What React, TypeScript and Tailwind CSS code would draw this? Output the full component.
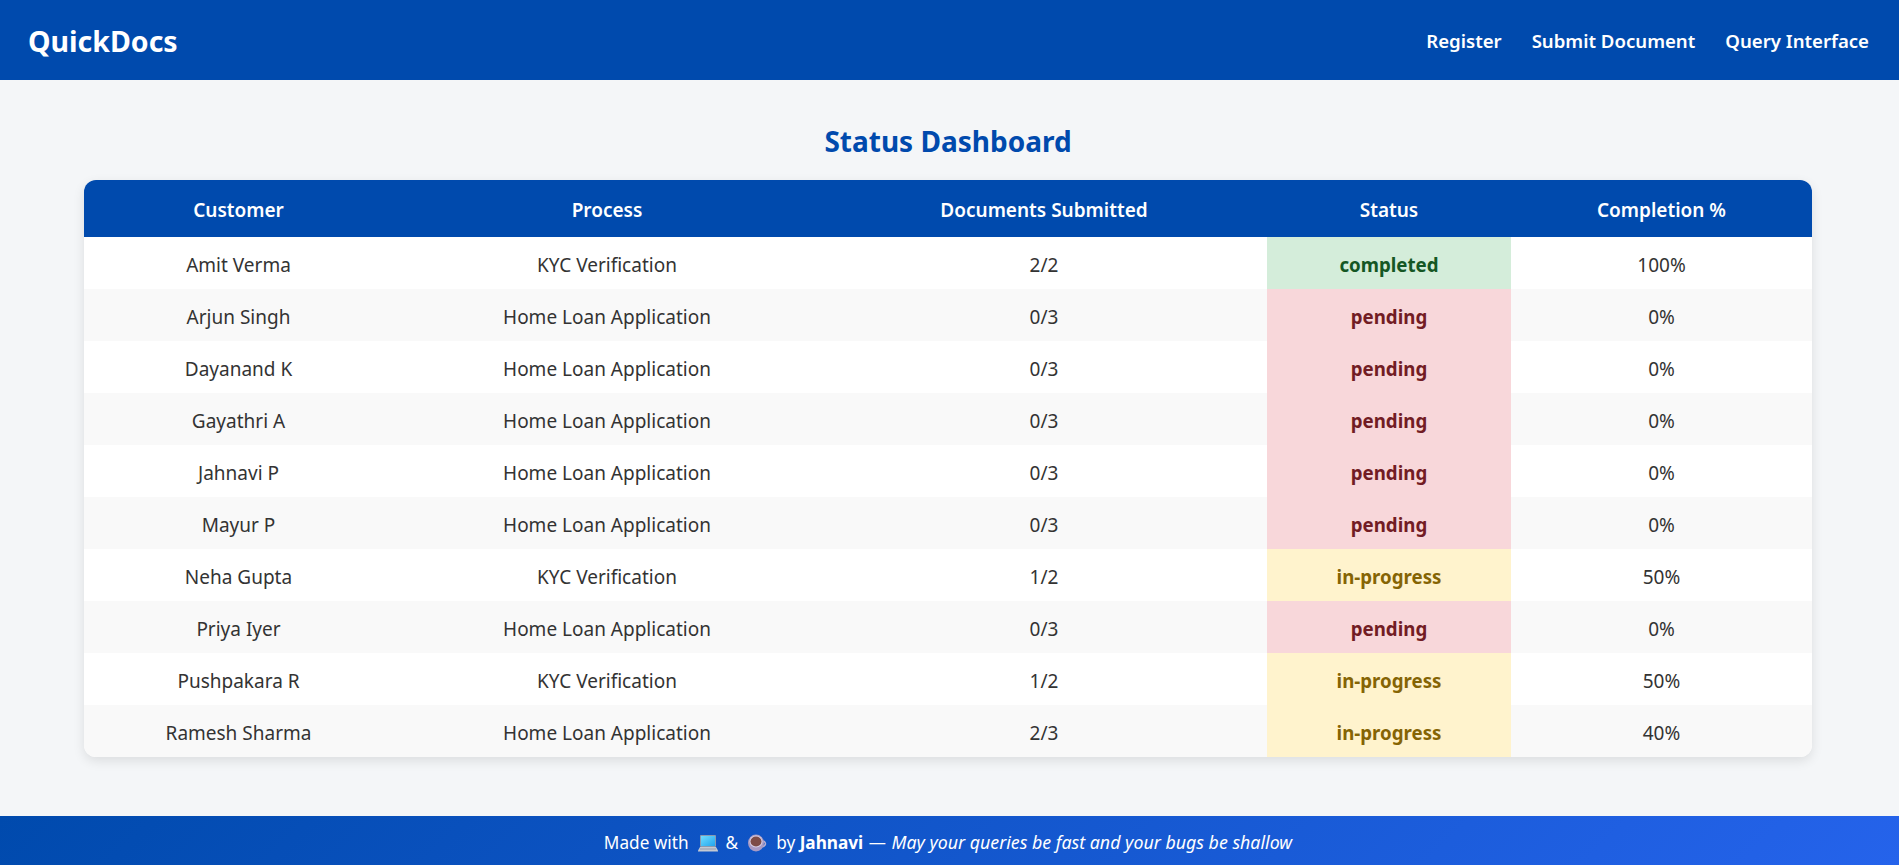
const ROWS = [
  { customer: "Amit Verma", process: "KYC Verification", docs: "2/2", status: "completed", pct: "100%" },
  { customer: "Arjun Singh", process: "Home Loan Application", docs: "0/3", status: "pending", pct: "0%" },
  { customer: "Dayanand K", process: "Home Loan Application", docs: "0/3", status: "pending", pct: "0%" },
  { customer: "Gayathri A", process: "Home Loan Application", docs: "0/3", status: "pending", pct: "0%" },
  { customer: "Jahnavi P", process: "Home Loan Application", docs: "0/3", status: "pending", pct: "0%" },
  { customer: "Mayur P", process: "Home Loan Application", docs: "0/3", status: "pending", pct: "0%" },
  { customer: "Neha Gupta", process: "KYC Verification", docs: "1/2", status: "in-progress", pct: "50%" },
  { customer: "Priya Iyer", process: "Home Loan Application", docs: "0/3", status: "pending", pct: "0%" },
  { customer: "Pushpakara R", process: "KYC Verification", docs: "1/2", status: "in-progress", pct: "50%" },
  { customer: "Ramesh Sharma", process: "Home Loan Application", docs: "2/3", status: "in-progress", pct: "40%" },
];

const STATUS_STYLES: Record<string, string> = {
  completed: "bg-[#d4edda] text-[#155724]",
  pending: "bg-[#f8d7da] text-[#721c24]",
  "in-progress": "bg-[#fff3cd] text-[#856404]",
};

function LaptopIcon() {
  return (
    <svg width="20" height="20" viewBox="0 0 20 20" className="inline-block align-[-4px] ml-[9px] mr-[8px]">
      <defs>
        <linearGradient id="screen" x1="0" y1="0" x2="1" y2="1">
          <stop offset="0" stopColor="#6fdcff" />
          <stop offset="1" stopColor="#22a5ee" />
        </linearGradient>
      </defs>
      <rect x="2" y="2" width="16" height="12" rx="1" fill="#8a9ab0" />
      <rect x="3" y="3" width="14" height="10" fill="url(#screen)" />
      <path d="M2 14h16l2 3.5v1H0v-1z" fill="#c4c9d2" />
      <rect x="2" y="15.5" width="16" height="1" fill="#959cab" />
    </svg>
  );
}

function CoffeeIcon() {
  return (
    <svg width="20" height="20" viewBox="0 0 20 20" className="inline-block align-[-4px] ml-[9px] mr-[9px]">
      <path d="M15 8.5c3-1 4 2 3 3.5s-3 2-4.500 2" fill="none" stroke="#b9aed0" strokeWidth="1.6" />
      <ellipse cx="9" cy="10" rx="8" ry="8.500" fill="#a99bc4" />
      <ellipse cx="9" cy="8.500" rx="6.500" ry="6" fill="#d8d0e6" />
      <ellipse cx="9" cy="8.500" rx="5.500" ry="5" fill="#7d4c47" />
    </svg>
  );
}

export default function App() {
  return (
    <div className="min-h-[865px] flex flex-col bg-[#f4f6f8] font-['Noto_Sans','Open_Sans',sans-serif] text-[#333]">
      <header className="h-20 pt-[2px] bg-[#004aad] flex items-center justify-between pl-7 pr-[30px] text-white">
        <div className="text-[28.5px] font-bold">QuickDocs</div>
        <nav className="flex gap-[30px] text-[18.6px] font-semibold">
          <a>Register</a>
          <a>Submit Document</a>
          <a>Query Interface</a>
        </nav>
      </header>

      <main className="flex-1">
        <h2 className="mt-[41px] mb-[19px] pr-[3px] text-center text-[28px] leading-[40px] font-bold text-[#004aad]">
          Status Dashboard
        </h2>
        <div className="ml-[84px] mr-[87px] rounded-xl overflow-hidden bg-white shadow-[0_4px_12px_rgba(0,0,0,0.1)]">
          <table className="w-full table-fixed border-collapse text-center text-[19px]">
            <colgroup>
              <col className="w-[309px]" />
              <col className="w-[428px]" />
              <col className="w-[446px]" />
              <col className="w-[244px]" />
              <col />
            </colgroup>
            <thead>
              <tr className="h-[57px] bg-[#004aad] text-white">
                <th className="pt-1 font-semibold">Customer</th>
                <th className="pt-1 font-semibold">Process</th>
                <th className="pt-1 font-semibold">Documents Submitted</th>
                <th className="pt-1 font-semibold">Status</th>
                <th className="pt-1 font-semibold">Completion %</th>
              </tr>
            </thead>
            <tbody>
              {ROWS.map((row) => (
                <tr key={row.customer} className="h-[52px] even:bg-[#f9f9f9]">
                  <td className="pt-1">{row.customer}</td>
                  <td className="pt-1">{row.process}</td>
                  <td className="pt-1">{row.docs}</td>
                  <td className={`pt-1 font-bold text-[18.7px] ${STATUS_STYLES[row.status]}`}>{row.status}</td>
                  <td className="pt-1">{row.pct}</td>
                </tr>
              ))}
            </tbody>
          </table>
        </div>
      </main>

      <footer className="h-[49px] pt-1 pr-[3px] flex items-center justify-center bg-[linear-gradient(135deg,#004aad,#2563eb)] text-white text-[17.2px]">
        <p>
          Made with<LaptopIcon />&amp;<CoffeeIcon />by <strong className="font-bold">Jahnavi</strong> <span className="mx-[1px]">—</span> <em className="text-[17.8px]">May your queries be fast and your bugs be shallow</em>
        </p>
      </footer>
    </div>
  );
}
